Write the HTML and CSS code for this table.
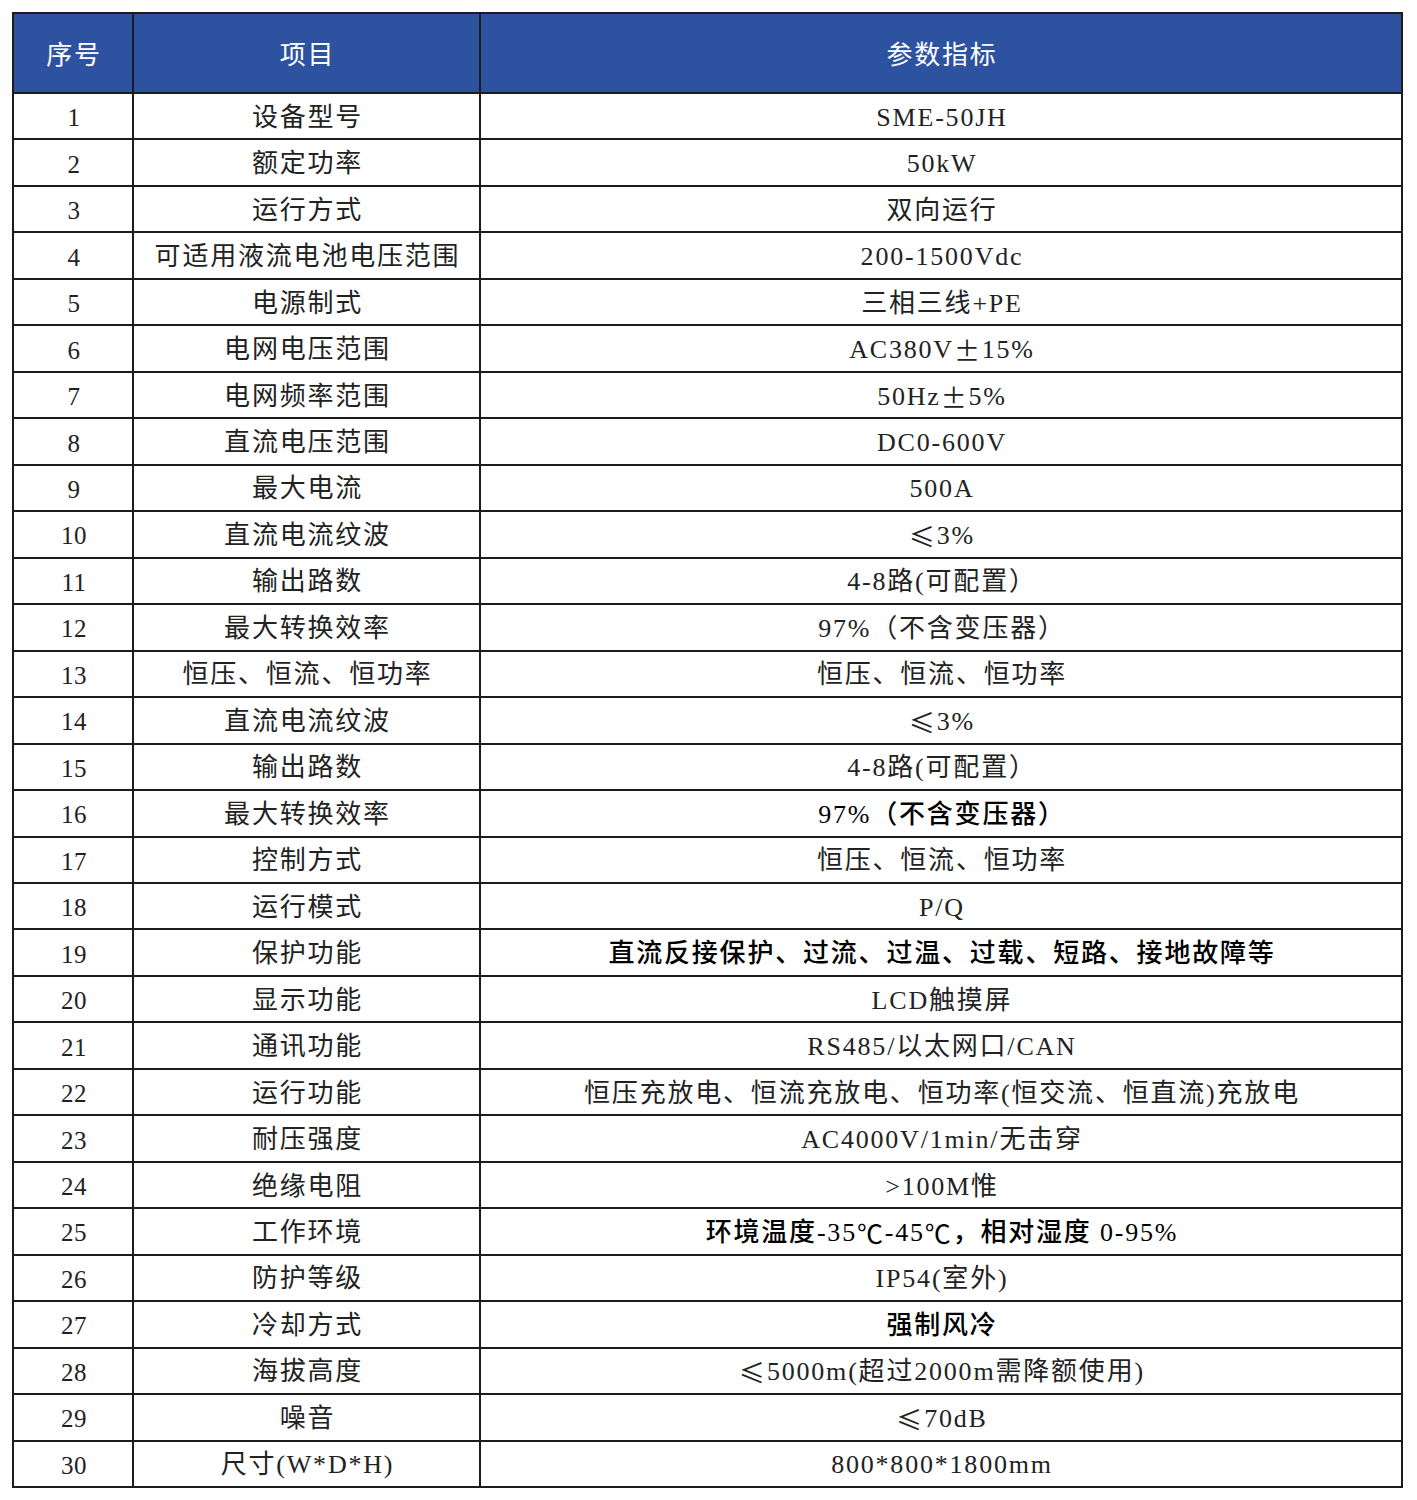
FILE: index.html
```html
<!DOCTYPE html>
<html lang="zh-CN">
<head>
<meta charset="utf-8">
<title>参数指标</title>
<link rel="stylesheet" href="styles.css">
</head>
<body>
<div class="page">
  <div class="spec" role="table">
    <div class="cell head">序号</div><div class="cell head">项目</div><div class="cell head">参数指标</div>
    <div class="cell num">1</div><div class="cell">设备型号</div><div class="cell">SME-50JH</div>
    <div class="cell num">2</div><div class="cell">额定功率</div><div class="cell">50kW</div>
    <div class="cell num">3</div><div class="cell">运行方式</div><div class="cell">双向运行</div>
    <div class="cell num">4</div><div class="cell">可适用液流电池电压范围</div><div class="cell">200-1500Vdc</div>
    <div class="cell num">5</div><div class="cell">电源制式</div><div class="cell">三相三线+PE</div>
    <div class="cell num">6</div><div class="cell">电网电压范围</div><div class="cell">AC380V<span class="sym">±</span>15%</div>
    <div class="cell num">7</div><div class="cell">电网频率范围</div><div class="cell">50Hz<span class="sym">±</span>5%</div>
    <div class="cell num">8</div><div class="cell">直流电压范围</div><div class="cell">DC0-600V</div>
    <div class="cell num">9</div><div class="cell">最大电流</div><div class="cell">500A</div>
    <div class="cell num">10</div><div class="cell">直流电流纹波</div><div class="cell"><span class="sym">≤</span>3%</div>
    <div class="cell num">11</div><div class="cell">输出路数</div><div class="cell">4-8路(可配置）</div>
    <div class="cell num">12</div><div class="cell">最大转换效率</div><div class="cell">97%（不含变压器）</div>
    <div class="cell num">13</div><div class="cell">恒压、恒流、恒功率</div><div class="cell">恒压、恒流、恒功率</div>
    <div class="cell num">14</div><div class="cell">直流电流纹波</div><div class="cell"><span class="sym">≤</span>3%</div>
    <div class="cell num">15</div><div class="cell">输出路数</div><div class="cell">4-8路(可配置）</div>
    <div class="cell num">16</div><div class="cell">最大转换效率</div><div class="cell strong">97%（不含变压器）</div>
    <div class="cell num">17</div><div class="cell">控制方式</div><div class="cell">恒压、恒流、恒功率</div>
    <div class="cell num">18</div><div class="cell">运行模式</div><div class="cell">P/Q</div>
    <div class="cell num">19</div><div class="cell">保护功能</div><div class="cell strong">直流反接保护、过流、过温、过载、短路、接地故障等</div>
    <div class="cell num">20</div><div class="cell">显示功能</div><div class="cell">LCD触摸屏</div>
    <div class="cell num">21</div><div class="cell">通讯功能</div><div class="cell">RS485/以太网口/CAN</div>
    <div class="cell num">22</div><div class="cell">运行功能</div><div class="cell">恒压充放电、恒流充放电、恒功率(恒交流、恒直流)充放电</div>
    <div class="cell num">23</div><div class="cell">耐压强度</div><div class="cell">AC4000V/1min/无击穿</div>
    <div class="cell num">24</div><div class="cell">绝缘电阻</div><div class="cell">&gt;100M惟</div>
    <div class="cell num">25</div><div class="cell">工作环境</div><div class="cell strong">环境温度-35<span class="sym">℃</span>-45<span class="sym">℃</span>，相对湿度 0-95%</div>
    <div class="cell num">26</div><div class="cell">防护等级</div><div class="cell">IP54(室外)</div>
    <div class="cell num">27</div><div class="cell">冷却方式</div><div class="cell strong">强制风冷</div>
    <div class="cell num">28</div><div class="cell">海拔高度</div><div class="cell"><span class="sym">≤</span>5000m(超过2000m需降额使用)</div>
    <div class="cell num">29</div><div class="cell">噪音</div><div class="cell"><span class="sym">≤</span>70dB</div>
    <div class="cell num">30</div><div class="cell">尺寸(W*D*H)</div><div class="cell">800*800*1800mm</div>
  </div>
</div>
</body>
</html>
```

FILE: styles.css
```css
html, body {
  margin: 0;
  padding: 0;
  background: #ffffff;
}

.page {
  padding: 12px;
}

.spec {
  display: grid;
  grid-template-columns: 120px 347px 922px;
  grid-template-rows: 80px repeat(30, 46.47px);
  border-top: 2px solid #1c1c1c;
  border-left: 2px solid #1c1c1c;
  width: max-content;
  font-family: "Liberation Serif", "Noto Sans CJK SC", serif;
  font-size: 26px;
  color: #222222;
}

.cell {
  box-sizing: border-box;
  border-right: 2px solid #1c1c1c;
  border-bottom: 2px solid #1c1c1c;
  display: flex;
  align-items: center;
  justify-content: center;
  padding-top: 3px;
  padding-left: 2px;
  white-space: nowrap;
  line-height: 1;
  letter-spacing: 1.8px;
}

.head {
  background: #2d53a0;
  color: #ffffff;
  font-size: 26px;
  padding-top: 6px;
}

.num {
  font-size: 25px;
  letter-spacing: 0.5px;
}

.sym {
  font-family: "Noto Sans CJK SC", sans-serif;
  font-weight: 400;
}

.strong {
  font-weight: 500;
  color: #000000;
}
```
